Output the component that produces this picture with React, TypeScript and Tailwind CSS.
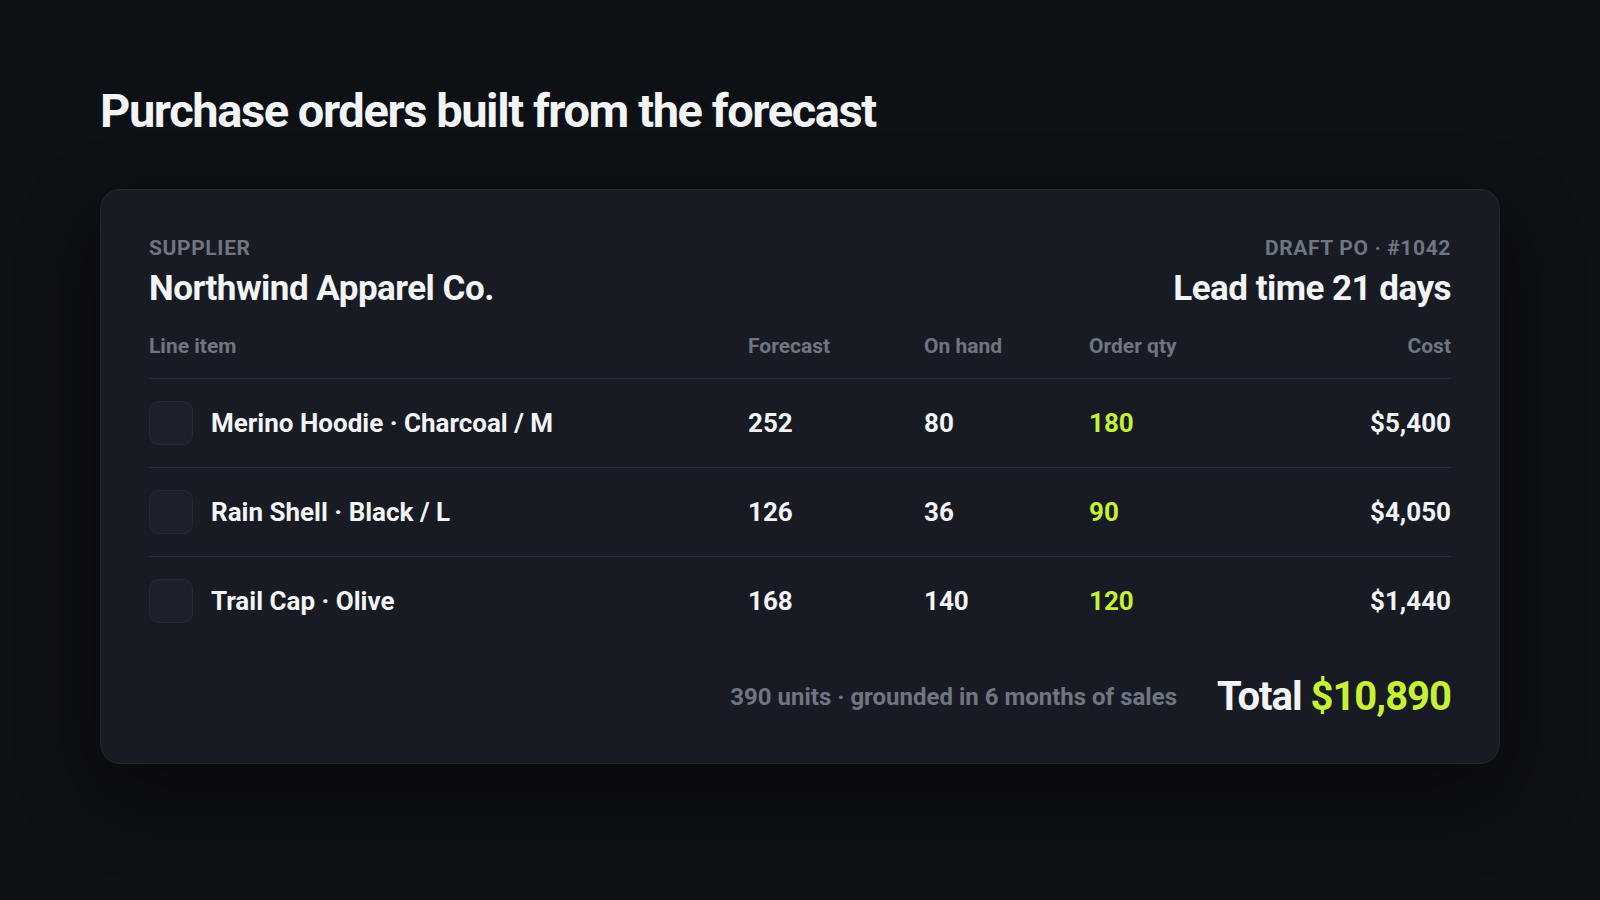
const rows = [
  { name: "Merino Hoodie · Charcoal / M", forecast: 252, onHand: 80, order: 180, cost: "$5,400" },
  { name: "Rain Shell · Black / L", forecast: 126, onHand: 36, order: 90, cost: "$4,050" },
  { name: "Trail Cap · Olive", forecast: 168, onHand: 140, order: 120, cost: "$1,440" },
];

const cols = "grid grid-cols-[599px_176px_165px_1fr] items-center";

export default function App() {
  return (
    <div className="min-h-screen bg-[#0d1015] px-[100px] pt-[87px] text-[#f3f4f6] font-['Roboto','Liberation_Sans',sans-serif]">
      <h1 className="text-[47px] leading-none font-bold tracking-[-0.03em]">
        Purchase orders built from the forecast
      </h1>

      <div className="mt-[55px] w-[1400px] rounded-[20px] border border-[#232833] bg-[#181b24] p-12 shadow-[0_30px_80px_rgba(0,0,0,0.45)]">
        <div className="flex items-start justify-between">
          <div>
            <div className="text-[21px] leading-none font-bold uppercase tracking-[0.03em] text-[#6f7682]">Supplier</div>
            <div className="mt-3 text-[35px] leading-none font-bold tracking-[-0.015em]">Northwind Apparel Co.</div>
          </div>
          <div className="text-right">
            <div className="text-[21px] leading-none font-bold uppercase tracking-[0.03em] text-[#6f7682]">Draft PO · #1042</div>
            <div className="mt-3 text-[35px] leading-none font-bold tracking-[-0.015em]">Lead time 21 days</div>
          </div>
        </div>

        <div className={`${cols} mt-[30px] pb-[21px] text-[21px] leading-none font-bold text-[#6f7682]`}>
          <div>Line item</div>
          <div>Forecast</div>
          <div>On hand</div>
          <div className="flex justify-between">
            <span>Order qty</span>
            <span>Cost</span>
          </div>
        </div>

        {rows.map((r) => (
          <div key={r.name} className={`${cols} border-t border-[#262b35] py-[22px] text-[26px] leading-none font-bold`}>
            <div className="flex items-center gap-[18px]">
              <div className="h-11 w-11 rounded-[10px] border border-[#262b36] bg-[#1c202a]" />
              <span>{r.name}</span>
            </div>
            <div>{r.forecast}</div>
            <div>{r.onHand}</div>
            <div className="flex justify-between">
              <span className="text-[#c6f135]">{r.order}</span>
              <span>{r.cost}</span>
            </div>
          </div>
        ))}

        <div className="mt-[34px] flex items-center justify-end gap-10">
          <span className="text-[24px] leading-none font-bold text-[#6f7682]">
            390 units · grounded in 6 months of sales
          </span>
          <span className="text-[40px] leading-[36px] font-bold tracking-[-0.025em]">
            Total <span className="text-[#c6f135]">$10,890</span>
          </span>
        </div>
      </div>
    </div>
  );
}
